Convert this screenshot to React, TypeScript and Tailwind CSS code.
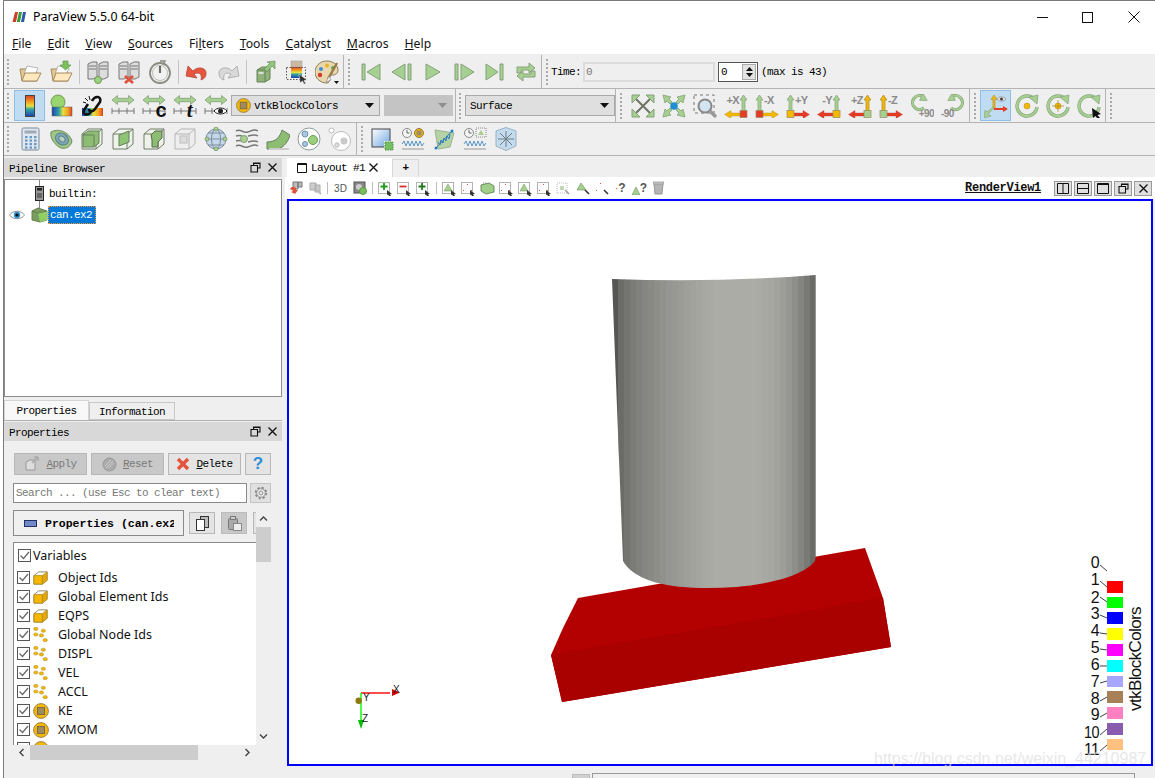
import React from "react";

const G = "#a6d08f";
const GS = "#84a07a";
const Y = "#f5b800";
const YS = "#a8892a";
const R = "#e53a24";

function S({ s = 24, children, vb = "0 0 24 24" }: { s?: number; children: React.ReactNode; vb?: string }) {
  return (
    <svg viewBox={vb} width={s} height={s} className="shrink-0">
      {children}
    </svg>
  );
}

const Defs = () => (
  <svg width="0" height="0" className="absolute">
    <defs>
      <linearGradient id="rbv" x1="0" y1="0" x2="0" y2="1">
        <stop offset="0" stopColor="#d9402a" />
        <stop offset="0.3" stopColor="#f0a020" />
        <stop offset="0.5" stopColor="#e8e040" />
        <stop offset="0.65" stopColor="#30a8a0" />
        <stop offset="1" stopColor="#2040b0" />
      </linearGradient>
      <linearGradient id="rbh" x1="0" y1="0" x2="1" y2="0">
        <stop offset="0" stopColor="#2040b0" />
        <stop offset="0.35" stopColor="#30a8a0" />
        <stop offset="0.55" stopColor="#e8e040" />
        <stop offset="0.8" stopColor="#f0a020" />
        <stop offset="1" stopColor="#d9402a" />
      </linearGradient>
      <linearGradient id="sky" x1="0" y1="0" x2="1" y2="1">
        <stop offset="0" stopColor="#ffffff" />
        <stop offset="1" stopColor="#6fa8e0" />
      </linearGradient>
    </defs>
  </svg>
);

const Folder = ({ arrow }: { arrow?: boolean }) => (
  <S>
    <path d="M4 21 L2 9 h6 l2 2 h8 l1 3 v7z" fill="#e5c88f" stroke="#a58a5e" />
    <path d="M6 14 L9 6 l11 2 -3 7z" fill="#fff" stroke="#999" strokeWidth="0.7" />
    <path d="M4 21 L7 13 H23 L19 21Z" fill="#fde9bd" stroke="#a58a5e" />
    {arrow && <path d="M14 1 h5 v4 h3 l-5.500 5 -5.500 -5 h3z" fill="#7cc05c" stroke="#5d9a48" strokeWidth="0.7" />}
  </S>
);

const Servers = ({ badge }: { badge?: "ok" | "x" | "none" }) => (
  <S>
    <path d="M2 4 l4 -2 h5 v15 l-4 2 h-5z" fill="#ddd" stroke="#777" />
    <path d="M13 4 l4 -2 h5 v15 l-4 2 h-5z" fill="#ddd" stroke="#777" />
    <path d="M3 6 h7 M3 9 h7 M14 6 h7 M14 9 h7" stroke="#777" strokeWidth="1.2" />
    <path d="M12 16 v4" stroke="#777" />
    {badge === "ok" && <circle cx="12" cy="20" r="3.500" fill="#9ed07f" stroke="#6b9c58" />}
    {badge === "x" && <path d="M8 16 L16 23 M16 16 L8 23" stroke="#e0533c" strokeWidth="2.800" />}
  </S>
);

const Power = () => (
  <S>
    <circle cx="12" cy="13" r="10" fill="#f2f2f2" stroke="#8b8b80" strokeWidth="1.800" />
    <circle cx="12" cy="13" r="7.500" fill="none" stroke="#bbb" />
    <path d="M12 6 V13" stroke="#6f6f65" strokeWidth="2.200" />
    <path d="M12 1 h5 l-2 4" fill="none" stroke="#8b8b80" strokeWidth="1.400" />
  </S>
);

const Undo = ({ c = "#e8553f", st = "#b34a38", flip }: { c?: string; st?: string; flip?: boolean }) => (
  <S>
    <g transform={flip ? "translate(24 0) scale(-1 1)" : undefined}>
      <path d="M8 11 C12 6 22 7 21 14 C21 17 19 19 16 20 C17 16 16 11 9 14 L12 18 L1 16 L3 6 L8 11Z" fill={c} stroke={st} strokeWidth="0.8" />
    </g>
  </S>
);

const SaveData = () => (
  <S>
    <path d="M4 10 l5 -3 h8 v12 l-5 3 h-8z" fill="#8fb37a" stroke="#66805a" />
    <path d="M4 10 h8 v12 M12 10 l5 -3" fill="none" stroke="#66805a" />
    <rect x="5.500" y="12" width="5" height="2" fill="#ddd" />
    <path d="M11 9 L17 3 L14 2 L22 1 L22 9 L19 6 L14 12z" fill="#8fc77a" stroke="#66805a" strokeWidth="0.6" />
  </S>
);

const Screenshot = () => (
  <S>
    <rect x="7" y="1" width="11" height="6" fill="#cbb9a2" stroke="#999" strokeWidth="0.5" />
    <rect x="7" y="7" width="11" height="11" fill="url(#rbv)" />
    <rect x="2.500" y="7.500" width="19" height="12" fill="none" stroke="#555" strokeDasharray="1.500 1.500" />
    <path d="M15 14 L23 20 L20 20.500 L22 24 L20 24 L18.500 21 L16 23z" fill="#333" stroke="#fff" strokeWidth="0.5" />
  </S>
);

const Palette = () => (
  <S>
    <path d="M12 1 C4 1 0 7 0 12 C0 18 5 23 12 23 C14 23 15 21 14 19 C13 17 14 15 17 15 C21 15 23 13 23 10 C23 5 18 1 12 1Z" fill="#e9d7ae" stroke="#8a7a55" />
    <circle cx="6" cy="9" r="2" fill="#3b8ed0" />
    <circle cx="12" cy="5.500" r="2" fill="#e9b423" />
    <circle cx="5" cy="15" r="2.200" fill="#d83a2a" />
    <circle cx="18" cy="8" r="2" fill="#55ad55" />
    <path d="M22 3 L13 19" stroke="#9a7b4a" strokeWidth="2.500" />
    <path d="M14 16 L11 22 L16 20z" fill="#eee" stroke="#777" strokeWidth="0.5" />
    <path d="M19 21 h5 l-2.500 3z" fill="#111" />
  </S>
);

const Vcr = ({ d }: { d: string }) => (
  <S>
    <path d={d} fill={G} stroke={GS} strokeWidth="1" />
  </S>
);

const Loop = () => (
  <S>
    <path d="M3 13 V7 h12 V3 l6 5 -6 5 V10 H7 v3z M21 11 v6 H9 v4 l-6 -5 6 -5 v3 H17 v-3z" fill={G} stroke={GS} />
  </S>
);

const Colormap = () => (
  <S>
    <rect x="7.500" y="1.500" width="9" height="21" fill="url(#rbv)" stroke="#444" />
  </S>
);

const SphereMap = () => (
  <S>
    <circle cx="9" cy="8" r="7" fill="#98d56e" stroke="#6f9c58" />
    <rect x="3" y="13" width="20" height="9" fill="url(#rbh)" stroke="#666" strokeWidth="0.5" />
  </S>
);

const LinkMap = () => (
  <S>
    <rect x="2" y="14" width="21" height="8" fill="url(#rbh)" />
    <path d="M12 7 C15 1 22 2 20 8 L15 15 C13 18 9 18 9 15 M11 18 C8 22 2 21 4 16 L8 10" fill="none" stroke="#111" strokeWidth="2.600" />
    <path d="M5 4 L8 7 M9 2 L10 6 M3 8 L6 9" stroke="#111" strokeWidth="1" />
  </S>
);

const Rescale = ({ children }: { children?: React.ReactNode }) => (
  <S>
    <path d="M1 6 l5.500 -4.500 v2.800 h11 V1.500 L23 6 l-5.500 4.500 V7.700 h-11 v2.800z" fill={G} stroke={GS} strokeWidth="0.8" />
    <path d="M1 17 H23 M1 14 V20 M8 14 V20 M16 14 V20 M23 14 V20" stroke="#777" strokeWidth="1" fill="none" />
    {children}
  </S>
);

const Eye = ({ s = 14 }: { s?: number }) => (
  <svg viewBox="0 0 16 10" width={s + 2} height={(s * 10) / 14} className="shrink-0">
    <path d="M0.500 5 C4 0 12 0 15.500 5 C12 10 4 10 0.500 5Z" fill="#fff" stroke="#777" strokeWidth="0.8" />
    <circle cx="8" cy="5" r="3.200" fill="#2b8fd0" />
    <circle cx="8" cy="5" r="1.600" fill="#111" />
  </svg>
);

const FieldIcon = ({ s = 16 }: { s?: number }) => (
  <S s={s} vb="0 0 16 16">
    <circle cx="8" cy="8" r="7.400" fill={Y} stroke="#9a8450" />
    <rect x="4.500" y="4.500" width="7" height="7" fill="#a08a60" stroke="#7a6a48" />
  </S>
);

const CellIcon = () => (
  <S s={15} vb="0 0 16 16">
    <path d="M1 6 L6 2 H15 V11 L10 15 H1Z" fill="none" stroke="#8a8260" />
    <path d="M1 6 H10 V15 H1Z" fill={Y} stroke="#b89020" />
    <path d="M10 6 L15 2 V11 L10 15Z" fill="#e8a800" stroke="#b89020" />
  </S>
);

const PointsIcon = () => (
  <S s={15} vb="0 0 16 16">
    {[
      [3, 2],
      [11, 4],
      [3, 8],
      [9, 9],
      [13, 14],
    ].map(([x, y], i) => (
      <ellipse key={i} cx={x} cy={y} rx="2.300" ry="1.700" fill={Y} stroke="#b09030" strokeWidth="0.6" />
    ))}
  </S>
);

const Calc = () => (
  <S>
    <rect x="4" y="1" width="17" height="22" rx="1.500" fill="#dfe8f2" stroke="#7a8794" />
    <rect x="6.500" y="3.500" width="12" height="3" fill="#9fa9b3" />
    {[9, 12.5, 16, 19.5].flatMap((y) =>
      [7, 11.5, 16].map((x) => <rect key={`${x}-${y}`} x={x} y={y} width="2.500" height="2.200" fill="#6c98c0" />),
    )}
  </S>
);

const Contour = () => (
  <S>
    <path d="M2 5 C8 1 20 4 23 14 C22 21 14 23 10 20 C4 16 1 10 2 5Z" fill="#9cc884" stroke="#708c62" />
    <ellipse cx="13" cy="12" rx="7" ry="5.500" fill="#7fa7b8" stroke="#5d7f8c" transform="rotate(35 13 12)" />
    <ellipse cx="13" cy="12" rx="3.500" ry="2.500" fill="#b8d2c0" stroke="#5d7f8c" transform="rotate(35 13 12)" />
  </S>
);

const Box = ({ v }: { v: "clip" | "slice" | "extract" | "ghost" }) => {
  const st = v === "ghost" ? "#b5b5b5" : "#6f7d66";
  return (
    <S>
      <path d="M2 7 L8 2 H22 V17 L16 22 H2Z" fill={v === "ghost" ? "#eee" : "#eef2ea"} stroke={st} />
      <path d="M2 7 H16 V22 M16 7 L22 2" fill="none" stroke={st} />
      {v === "clip" && <path d="M3 8 L8 4 H19 V16 L14 20 H3Z" fill="#8dbd72" stroke="#64805a" />}
      {v === "clip" && <path d="M3 8 H14 V20" fill="none" stroke="#64805a" />}
      {v === "slice" && <path d="M8 8 L18 4 V15 L8 19Z" fill="#8dc475" stroke="#64805a" />}
      {v === "extract" && <path d="M9 8 L13 4 H20 V11 L16 15 V20 H10 V13Z" fill="#8dbd72" stroke="#55664c" />}
      {v === "ghost" && <rect x="7" y="9" width="7" height="7" fill="#ddd" stroke="#bbb" />}
    </S>
  );
};

const Globe = () => (
  <S>
    <circle cx="12" cy="12" r="10" fill="#c4d8ec" stroke="#7d8c9a" />
    <ellipse cx="12" cy="12" rx="4.500" ry="10" fill="none" stroke="#7d8c9a" />
    <path d="M2 12 H22 M4 6 H20 M4 18 H20" stroke="#7d8c9a" />
    {[
      [12, 2],
      [3, 12],
      [21, 12],
      [12, 22],
    ].map(([x, y], i) => (
      <circle key={i} cx={x} cy={y} r="2" fill={G} stroke={GS} />
    ))}
  </S>
);

const Stream = () => (
  <S>
    <path d="M1 4 C6 1 8 7 13 5 S20 2 23 4 M1 19 C6 16 8 22 13 20 S20 17 23 19 M13 9 C17 8 20 7 23 9 M13 15 C17 14 20 13 23 15" fill="none" stroke="#777" strokeWidth="1.500" />
    <path d="M1 9 C4 8 6 9 7 9 M1 14 C4 13 6 14 7 14" stroke="#777" strokeWidth="1.500" fill="none" />
    <circle cx="9" cy="12" r="3.500" fill={G} stroke={GS} />
  </S>
);

const Warp = () => (
  <S>
    <path d="M1 15 C10 15 14 10 16 3 L24 8 C22 15 18 20 12 22 H1Z" fill="#8dbd72" stroke="#64805a" />
    <path d="M3 22 H23" stroke="#ccc" strokeWidth="2" />
  </S>
);

const Group = ({ faded }: { faded?: boolean }) => (
  <S>
    {faded ? (
      <>
        <circle cx="13" cy="14" r="9.500" fill="#fff" stroke="#bbb" />
        <circle cx="3.500" cy="3.500" r="2.500" fill="#fff" stroke="#bbb" />
        <circle cx="16" cy="14" r="3.500" fill="#c9c9c9" />
        <circle cx="9" cy="18" r="2.200" fill="#ddd" stroke="#bbb" />
      </>
    ) : (
      <>
        <circle cx="12" cy="12" r="11" fill="#fff" stroke="#8c9c9c" />
        <circle cx="8" cy="7" r="3" fill="#a8c8e4" stroke="#6e8ea8" />
        <circle cx="8" cy="17" r="2.500" fill="#a8c8e4" stroke="#6e8ea8" />
        <circle cx="16" cy="13" r="4.500" fill="#9ad07c" stroke="#6b9c58" />
      </>
    )}
  </S>
);

const Fit = () => (
  <S>
    <path d="M12 12 L3 3 M12 12 L21 3 M12 12 L3 21 M12 12 L21 21" stroke="#6f7466" strokeWidth="2" />
    <path d="M1 1 H9 L1 9Z M23 1 H15 L23 9Z M1 23 H9 L1 15Z M23 23 H15 L23 15Z" fill={G} stroke={GS} />
  </S>
);

const Zoomto = () => (
  <S>
    <path d="M1 1 L9 3 L7 5 L10 8 L8 10 L5 7 L3 9Z M23 1 L15 3 L17 5 L14 8 L16 10 L19 7 L21 9Z M1 23 L9 21 L7 19 L10 16 L8 14 L5 17 L3 15Z M23 23 L15 21 L17 19 L14 16 L16 14 L19 17 L21 15Z" fill={G} stroke={GS} strokeWidth="0.8" />
    <circle cx="12" cy="12" r="3.800" fill="#1f8fd0" />
  </S>
);

const Mag = () => (
  <S>
    <rect x="1" y="1" width="20" height="18" fill="none" stroke="#777" strokeDasharray="3 3" />
    <circle cx="12" cy="12" r="6.500" fill="#d3e4f0" stroke="#888" strokeWidth="2" />
    <path d="M17 17 L23 23" stroke="#999" strokeWidth="3.500" />
  </S>
);

const Axis = ({
  side,
  label,
  up,
  sq,
  arrow,
}: {
  side: "l" | "r";
  label: string;
  up: string;
  sq: string;
  arrow: string;
}) => {
  const ax = side === "r" ? 16 : 1;
  const upX = ax + 3.5;
  return (
    <S>
      <path d={`M${upX} 1 l3.500 5 h-2 v11 h-3 v-11 h-2z`} fill={up} stroke={up === G ? GS : YS} strokeWidth="0.7" />
      {side === "r" ? (
        <path d="M16 19 H7 v-2.500 l-6.500 4 6.500 4 v-2.500 H16z" fill={arrow} stroke={arrow === Y ? YS : "#b34a38"} strokeWidth="0.4" />
      ) : (
        <path d="M8 19 H17 v-2.500 l6.500 4 -6.500 4 v-2.500 H8z" fill={arrow} stroke={arrow === Y ? YS : "#b34a38"} strokeWidth="0.4" />
      )}
      <rect x={ax} y="16.500" width="7" height="7" fill={sq} stroke="#9a8a60" strokeWidth="0.7" />
      <text
        x={side === "r" ? 15 : 9}
        y="10"
        textAnchor={side === "r" ? "end" : "start"}
        fontSize="11"
        fontWeight="700"
        fill="#8a8a8a"
        fontFamily="Liberation Sans, sans-serif"
      >
        {label}
      </text>
    </S>
  );
};

const Rot = ({ label, flip }: { label: string; flip?: boolean }) => (
  <S>
    <g transform={flip ? "translate(24 0) scale(-1 1)" : undefined}>
      <path d="M14 14 A7 7 0 1 1 13 2.500" fill="none" stroke={GS} strokeWidth="3.200" />
      <path d="M14 14 A7 7 0 1 1 13 2.500" fill="none" stroke={G} strokeWidth="1.800" />
      <path d="M11 0 L18 5 L11 8z" fill={G} stroke={GS} strokeWidth="0.6" transform="rotate(25 14 4)" />
    </g>
    <text x={flip ? 0 : 24} y="23" textAnchor={flip ? "start" : "end"} fontSize="10" fontWeight="700" fill="#8a8a8a" fontFamily="Liberation Sans, sans-serif">
      {label}
    </text>
  </S>
);

const Ori = () => (
  <S>
    <path d="M10 1 l3 4.500 h-2 v9 h-2 v-9 h-2z" fill={Y} stroke={YS} strokeWidth="0.6" />
    <path d="M10 14 H19 v-2 l5 3 -5 3 v-2 H10z" fill={R} />
    <path d="M10 14 L4 20 L7 22 L0 24 L1 16 L3 18 L9 13z" fill={G} stroke={GS} strokeWidth="0.6" />
    <path d="M13 5 C15 2 20 2 22 5 C20 8 15 8 13 5Z" fill="#ddd" stroke="#888" strokeWidth="0.6" />
    <circle cx="17.500" cy="5" r="1.500" fill="#444" />
  </S>
);

const RotCenter = ({ v }: { v: "dot" | "target" | "pick" }) => (
  <S>
    <path d="M20 6 A10 10 0 1 0 22 13" fill="none" stroke={GS} strokeWidth="3.400" />
    <path d="M20 6 A10 10 0 1 0 22 13" fill="none" stroke={G} strokeWidth="2.200" />
    <path d="M14 3 L23 1 L22 10Z" fill={G} stroke={GS} strokeWidth="0.7" />
    {v === "dot" && <circle cx="12" cy="12" r="3" fill={Y} stroke={YS} strokeWidth="0.5" />}
    {v === "target" && (
      <>
        <circle cx="12" cy="12" r="3" fill={Y} stroke={YS} strokeWidth="0.5" />
        <path d="M12 6 V18 M6 12 H18" stroke={YS} strokeWidth="0.7" />
      </>
    )}
    {v === "pick" && <path d="M15 14 L24 20 L20.500 21 L23 24 L20 24 L18.500 22 L16 24z" fill="#111" />}
  </S>
);

const CompareIcon = () => (
  <S>
    <rect x="2" y="2" width="18" height="18" fill="url(#sky)" stroke="#444" />
    <rect x="14" y="14" width="10" height="10" fill="#f0f0f0" />
    <rect x="15" y="15" width="8" height="8" fill="#74c060" stroke="#4f8c44" strokeDasharray="1.500 1" />
  </S>
);

const Wave = ({ y = 17 }: { y?: number }) => (
  <path d={`M1 ${y} l2 -3 2 5 2 -5 2 5 2 -5 2 5 2 -5 2 5 2 -5 2 5 2 -3`} fill="none" stroke="#4a8cc0" strokeWidth="0.9" />
);

const Plot1 = () => (
  <S>
    <circle cx="6" cy="6" r="4.500" fill="#f5f5f5" stroke="#888" />
    <path d="M6 3 V6 H8.500" fill="none" stroke="#666" />
    <circle cx="18" cy="6" r="4.500" fill={Y} stroke="#8a7a50" />
    <rect x="15.500" y="3.500" width="5" height="5" fill="#a08a60" />
    <Wave />
    <path d="M1 22 H23" stroke="#999" />
  </S>
);

const Plot2 = () => (
  <S>
    <path d="M3 3 L22 6 L18 20 L6 22Z" fill="#b6d3a6" stroke="#9ab58c" />
    <path d="M4 21 L20 4" stroke="#2a78c0" strokeWidth="1" />
    <path d="M6 15 l2 3 1 -5 2 3 1 -5 2 3 1 -5 2 3 1 -5" fill="none" stroke="#2a78c0" strokeWidth="1" />
    <circle cx="4" cy="21" r="1.500" fill="#2a78c0" />
    <circle cx="20" cy="4" r="1.500" fill="#2a78c0" />
  </S>
);

const Plot3 = () => (
  <S>
    <circle cx="6" cy="6" r="4.500" fill="#f5f5f5" stroke="#888" />
    <path d="M6 3 V6 H8.500" fill="none" stroke="#666" />
    <rect x="13" y="1" width="10" height="9" fill="none" stroke="#888" strokeDasharray="1 1" />
    <path d="M15 8 l3 -5 3 5z" fill={G} />
    <Wave />
    <path d="M1 22 H23" stroke="#999" />
  </S>
);

const Cube3 = () => (
  <S>
    <path d="M12 0.500 L22 4 V19 L12 23.500 L2 19 V4Z" fill="#c3dbee" stroke="#9ab0c2" />
    <path d="M4 12 H20 M12 4 V20 M6 6 L18 18 M18 6 L6 18" stroke="#6f7c82" strokeWidth="1" />
  </S>
);

const B = ({ children, sel }: { children: React.ReactNode; sel?: boolean }) => (
  <div
    className={
      sel
        ? "w-[31px] h-[31px] shrink-0 flex items-center justify-center bg-[#bfdcf3] border border-[#8fbfe6]"
        : "w-[31px] h-[31px] shrink-0 flex items-center justify-center"
    }
  >
    {children}
  </div>
);

const Sep = () => (
  <div className="w-[6px] h-full shrink-0 flex items-center justify-center">
    <div className="w-px h-[24px] bg-[#c4c4c4]" />
  </div>
);

const Handle = ({ cls }: { cls: string }) => <div className={`w-[2px] h-[26px] shrink-0 border-l-2 border-dotted border-[#ababab] ${cls}`} />;

const Section = ({ cls, children }: { cls: string; children: React.ReactNode }) => (
  <div className={`flex items-center h-full shrink-0 ${cls}`}>{children}</div>
);

const Row = ({ h, children }: { h: string; children: React.ReactNode }) => (
  <div className={`flex items-center bg-[#efefef] border-b border-[#b4b4b4] shrink-0 ${h}`}>{children}</div>
);

const Combo = ({ w, icon, label, disabled }: { w: string; icon?: boolean; label?: string; disabled?: boolean }) => (
  <div
    className={`${w} h-[21px] shrink-0 flex items-center pl-[4px] pr-[5px] border ${
      disabled ? "bg-[#c4c4c4] border-[#c4c4c4]" : "bg-[#dfdfdf] border-[#a8a8a8]"
    }`}
  >
    {icon && (
      <span className="mr-[3px]">
        <FieldIcon s={15} />
      </span>
    )}
    <span className="flex-1 whitespace-pre pt-[2px]">{label}</span>
    <svg width="9" height="5" viewBox="0 0 9 5">
      <path d="M0 0 H9 L4.500 5Z" fill={disabled ? "#8f8f8f" : "#111"} />
    </svg>
  </div>
);

const Toolbar1 = () => (
  <Row h="h-[34px]">
    <Section cls="pl-[3px] border-r border-[#b4b4b4]">
      <Handle cls="mr-[5px]" />
      <B><Folder /></B>
      <B><Folder arrow /></B>
      <Sep />
      <B><Servers badge="ok" /></B>
      <B><Servers badge="x" /></B>
      <B><Power /></B>
      <Sep />
      <B><Undo /></B>
      <B><Undo c="#d9d9d9" st="#a3a3a3" flip /></B>
      <Sep />
      <B><SaveData /></B>
      <B><Screenshot /></B>
      <B><Palette /></B>
      <div className="w-px" />
    </Section>
    <Section cls="pl-[4px] border-r border-[#b4b4b4]">
      <Handle cls="mr-[5px]" />
      <B><Vcr d="M3 4 H6 V20 H3Z M21 4 V20 L8 12Z" /></B>
      <B><Vcr d="M18 4 H21 V20 H18Z M15 4 V20 L2 12Z" /></B>
      <B><Vcr d="M5 4 L19 12 L5 20Z" /></B>
      <B><Vcr d="M3 4 H6 V20 H3Z M9 4 L22 12 L9 20Z" /></B>
      <B><Vcr d="M3 4 L15 12 L3 20Z M17 4 H20 V20 H17Z" /></B>
      <B><Loop /></B>
    </Section>
    <Section cls="pl-[4px]">
      <Handle cls="mr-[3px]" />
      <span className="w-[32px] pt-px">Time:</span>
      <div className="w-[132px] h-[20px] border-2 border-[#dcdcdc] bg-[#efefef] pl-[1px] pt-px flex items-center text-[#777]">0</div>
      <div className="ml-[3px] w-[40px] h-[20px] border border-[#555] bg-white flex items-center justify-between">
        <span className="pl-[2px] pt-px">0</span>
        <div className="w-[14px] h-[16px] mr-px border border-[#aaa] bg-[#e2e2e2] flex flex-col items-center justify-center gap-[2px]">
          <svg width="7" height="4" viewBox="0 0 7 4"><path d="M0 4 L3.500 0 L7 4Z" fill="#111" /></svg>
          <svg width="7" height="4" viewBox="0 0 7 4"><path d="M0 0 H7 L3.500 4Z" fill="#111" /></svg>
        </div>
      </div>
      <span className="ml-[3px] pt-px">(max is 43)</span>
    </Section>
  </Row>
);

const Toolbar2 = () => (
  <Row h="h-[34px]">
    <Section cls="pl-[3px] border-r border-[#b4b4b4]">
      <Handle cls="mr-[5px]" />
      <B sel><Colormap /></B>
      <B><SphereMap /></B>
      <B><LinkMap /></B>
      <B><Rescale /></B>
      <B>
        <Rescale>
          <text x="24" y="23" textAnchor="end" fontSize="20" fontWeight="700" fontFamily="Liberation Sans, sans-serif" fill="#111">c</text>
        </Rescale>
      </B>
      <B>
        <Rescale>
          <text x="19" y="23" textAnchor="end" fontSize="21" fontWeight="700" fontStyle="italic" fontFamily="Liberation Serif, serif" fill="#111">t</text>
        </Rescale>
      </B>
      <B>
        <Rescale>
          <path d="M10 17 C13 13 20 13 23 17 C20 21 13 21 10 17Z" fill="#fff" stroke="#222" />
          <circle cx="16.500" cy="17" r="2.500" fill="#222" />
        </Rescale>
      </B>
      <Combo w="w-[149px]" icon label="vtkBlockColors" />
      <div className="ml-[4px]"><Combo w="w-[69px]" disabled /></div>
      <div className="w-[2px]" />
    </Section>
    <Section cls="pl-[3px] border-r border-[#b4b4b4]">
      <Handle cls="mr-[4px]" />
      <Combo w="w-[150px]" label="Surface" />
    </Section>
    <Section cls="pl-[4px] border-r border-[#b4b4b4]">
      <Handle cls="mr-[5px]" />
      <B><Fit /></B>
      <B><Zoomto /></B>
      <B><Mag /></B>
      <B><Axis side="r" label="+X" up={G} sq={R} arrow={Y} /></B>
      <B><Axis side="l" label="-X" up={G} sq={R} arrow={Y} /></B>
      <B><Axis side="l" label="+Y" up={G} sq={Y} arrow={R} /></B>
      <B><Axis side="r" label="-Y" up={G} sq={Y} arrow={R} /></B>
      <B><Axis side="r" label="+Z" up={Y} sq={G} arrow={R} /></B>
      <B><Axis side="l" label="-Z" up={Y} sq={G} arrow={R} /></B>
      <B><Rot label="+90" /></B>
      <B><Rot label="-90" flip /></B>
      <div className="w-px" />
    </Section>
    <Section cls="pl-[4px] border-r border-[#b4b4b4]">
      <Handle cls="mr-[4px]" />
      <B sel><Ori /></B>
      <B><RotCenter v="dot" /></B>
      <B><RotCenter v="target" /></B>
      <B><RotCenter v="pick" /></B>
      <div className="w-px" />
    </Section>
    <Section cls="pl-[4px]">
      <Handle cls="" />
    </Section>
  </Row>
);

const Toolbar3 = () => (
  <Row h="h-[33px]">
    <Section cls="pl-[3px] border-r border-[#b4b4b4]">
      <Handle cls="mr-[5px]" />
      <B><Calc /></B>
      <B><Contour /></B>
      <B><Box v="clip" /></B>
      <B><Box v="slice" /></B>
      <B><Box v="extract" /></B>
      <B><Box v="ghost" /></B>
      <B><Globe /></B>
      <B><Stream /></B>
      <B><Warp /></B>
      <B><Group /></B>
      <B><Group faded /></B>
      <div className="w-px" />
    </Section>
    <Section cls="pl-[4px]">
      <Handle cls="mr-[3px]" />
      <B><CompareIcon /></B>
      <B><Plot1 /></B>
      <B><Plot2 /></B>
      <B><Plot3 /></B>
      <B><Cube3 /></B>
    </Section>
  </Row>
);

const FloatIcon = () => (
  <svg width="11" height="11" viewBox="0 0 11 11">
    <path d="M3.500 3 V1 H10 V6 H7.500 M1 3.500 H7.500 V10 H1Z M1 3.500 H7.500 M3.500 1.500 H10" fill="none" stroke="#111" strokeWidth="1.100" />
  </svg>
);

const CloseIcon = ({ s = 9 }: { s?: number }) => (
  <svg width={s} height={s} viewBox="0 0 9 9">
    <path d="M0.500 0.500 L8.500 8.500 M8.500 0.500 L0.500 8.500" stroke="#111" strokeWidth="1.300" />
  </svg>
);

const DockTitle = ({ title }: { title: string }) => (
  <div className="h-[19px] shrink-0 bg-[#d8d8d8] flex items-center pl-[5px] pr-[5px]">
    <span className="flex-1 pt-[3px]">{title}</span>
    <FloatIcon />
    <span className="ml-[7px] flex"><CloseIcon /></span>
  </div>
);

const PipelineTree = () => (
  <div className="h-[218px] shrink-0 mt-[2px] border border-[#8b8f94] bg-white relative">
    <div className="absolute left-[34px] top-0 w-px h-[33px] bg-[#8a8a8a]" />
    <div className="flex items-center h-[25px] pt-[2px] pl-[30px]">
      <svg width="9" height="15" viewBox="0 0 9 15" className="relative">
        <rect x="0.500" y="0.500" width="8" height="14" fill="#999" stroke="#222" />
        <rect x="2" y="2" width="5" height="2.500" fill="#222" />
        <rect x="2" y="7" width="5" height="5" fill="#666" />
      </svg>
      <span className="ml-[5px] pt-px">builtin:</span>
    </div>
    <div className="flex items-center h-[18px] mt-[1px] pl-[4px] relative">
      <Eye s={14} />
      <span className="ml-[6px] flex">
        <svg width="17" height="16" viewBox="0 0 17 16">
          <path d="M1 4 L7 1 L16 4 V13 L9 15 L1 13Z" fill="#7a9c5e" stroke="#67804f" />
          <path d="M7 6 L16 4 V13 L9 15Z" fill="#8fd064" />
          <path d="M1 4 L7 6 L16 4" fill="none" stroke="#67804f" />
        </svg>
      </span>
      <span className="h-[18px] w-[48px] flex items-center pl-[1px] pt-px bg-[#0078d7] text-white border border-dotted border-[#ff9a2e]">can.ex2</span>
    </div>
  </div>
);

const Tabs = () => (
  <div className="h-[20px] shrink-0 mt-[4px] flex items-end border-b border-[#b0b0b0]">
    <div className="w-[85px] h-[20px] pt-[2px] bg-[#f8f8f8] border border-b-0 border-[#d4d4d4] flex items-center justify-center">Properties</div>
    <div className="w-[86px] h-[18px] pt-[2px] bg-[#efefef] border border-[#c8c8c8] flex items-center justify-center">Information</div>
  </div>
);

const Check = ({ cls }: { cls: string }) => (
  <div className={`w-[13px] h-[13px] shrink-0 border border-[#555] bg-white flex items-center justify-center ${cls}`}>
    <svg width="11" height="11" viewBox="0 0 11 11">
      <path d="M1.500 5.500 L4.500 8.500 L10 2" fill="none" stroke="#666" strokeWidth="1.200" />
    </svg>
  </div>
);

const PBtn = ({ w, disabled, children }: { w: string; disabled?: boolean; children: React.ReactNode }) => (
  <div
    className={`${w} h-[22px] shrink-0 flex items-center justify-center gap-[6px] border border-[#b8b8b8] ${
      disabled ? "bg-[#c8c8c8] text-[#7a7a7a]" : "bg-[#e4e4e4] text-black"
    }`}
  >
    {children}
  </div>
);

const vars: [string, "cell" | "pt" | "field"][] = [
  ["Object Ids", "cell"],
  ["Global Element Ids", "cell"],
  ["EQPS", "cell"],
  ["Global Node Ids", "pt"],
  ["DISPL", "pt"],
  ["VEL", "pt"],
  ["ACCL", "pt"],
  ["KE", "field"],
  ["XMOM", "field"],
  ["", "field"],
];

const Arrow = ({ d }: { d: "u" | "d" | "l" | "r" }) => (
  <svg width="9" height="9" viewBox="0 0 9 9">
    {d === "u" && <path d="M1 6.500 L4.500 3 L8 6.500" fill="none" stroke="#444" strokeWidth="1.400" />}
    {d === "d" && <path d="M1 2.500 L4.500 6 L8 2.500" fill="none" stroke="#444" strokeWidth="1.400" />}
    {d === "l" && <path d="M6.500 1 L3 4.500 L6.500 8" fill="none" stroke="#444" strokeWidth="1.400" />}
    {d === "r" && <path d="M2.500 1 L6 4.500 L2.500 8" fill="none" stroke="#444" strokeWidth="1.400" />}
  </svg>
);

const Properties = () => (
  <div className="flex-1 min-h-0 bg-[#efefef] pl-[9px] pt-[12px]">
    <div className="flex gap-[4px] pl-px">
      <PBtn w="w-[73px]" disabled>
        <svg width="16" height="16" viewBox="0 0 16 16">
          <path d="M2 6 L6 4 H11 V14 H2Z" fill="#ddd" stroke="#999" />
          <path d="M8 7 L14 1 M14 1 H10 M14 1 V5" stroke="#aaa" strokeWidth="1.500" fill="none" />
        </svg>
        <span className="pt-px"><u>A</u>pply</span>
      </PBtn>
      <PBtn w="w-[73px]" disabled>
        <svg width="15" height="15" viewBox="0 0 15 15">
          <circle cx="7.500" cy="7.500" r="6.500" fill="#aaa" stroke="#999" />
          <path d="M4 11 L11 4 M6 11.500 L11.500 6 M3 9 L9 3" stroke="#ccc" />
        </svg>
        <span className="pt-px"><u>R</u>eset</span>
      </PBtn>
      <PBtn w="w-[73px]">
        <svg width="14" height="14" viewBox="0 0 14 14">
          <path d="M2 2 L12 12 M12 2 L2 12" stroke="#e4533e" strokeWidth="3.400" />
        </svg>
        <span className="pt-px"><u>D</u>elete</span>
      </PBtn>
      <div className="w-[26px] h-[22px] shrink-0 border border-[#b8b8b8] bg-[#e4e4e4] flex items-center justify-center text-[#2a8fd8] text-[17px] font-bold font-['Liberation_Sans',sans-serif] tracking-normal">?</div>
    </div>
    <div className="flex mt-[8px] h-[20px]">
      <div className="w-[234px] h-[20px] border border-[#8a8a8a] bg-white pl-[2px] pt-px flex items-center text-[#777]">Search ... (use Esc to clear text)</div>
      <div className="ml-[3px] w-[21px] h-[20px] border border-[#c4c4c4] bg-[#e0e0e0] flex items-center justify-center">
        <svg width="16" height="16" viewBox="0 0 16 16">
          <circle cx="8" cy="8" r="5" fill="none" stroke="#888" strokeWidth="2.400" strokeDasharray="2.200 1.700" />
          <circle cx="8" cy="8" r="4.200" fill="#eee" stroke="#999" />
          <circle cx="8" cy="8" r="2" fill="#e0e0e0" stroke="#999" />
        </svg>
      </div>
    </div>
    <div className="flex mt-[7px] h-[235px]">
      <div className="w-[243px] shrink-0 flex flex-col overflow-hidden">
        <div className="flex h-[26px] shrink-0">
          <div className="w-[171px] shrink-0 h-[26px] border border-[#8a8a8a] bg-[#f0f0f0] flex items-center pl-[10px] pt-px overflow-hidden whitespace-nowrap font-bold text-[11.500px] tracking-normal">
            <svg width="13" height="7" viewBox="0 0 13 7" className="mr-[8px] shrink-0">
              <rect x="0.500" y="0.500" width="12" height="6" fill="#7289c8" stroke="#222f66" />
            </svg>
            <span className="w-[129px] overflow-hidden shrink-0">Properties (can.ex2)</span>
          </div>
          <div className="ml-[5px] mt-[2px] w-[26px] h-[22px] shrink-0 border border-[#b8b8b8] bg-[#e4e4e4] flex items-center justify-center">
            <svg width="15" height="15" viewBox="0 0 15 15">
              <rect x="5.500" y="0.500" width="8" height="11" fill="#bbb" stroke="#333" />
              <rect x="1.500" y="3.500" width="8" height="11" fill="#fff" stroke="#333" />
            </svg>
          </div>
          <div className="ml-[6px] mt-[2px] w-[26px] h-[22px] shrink-0 bg-[#c8c8c8] border border-[#bbb] flex items-center justify-center">
            <svg width="15" height="15" viewBox="0 0 15 15">
              <rect x="1.500" y="2.500" width="9" height="11" rx="1" fill="#aaa" stroke="#777" />
              <rect x="3.500" y="0.500" width="5" height="3" fill="#ccc" stroke="#777" />
              <rect x="6.500" y="7.500" width="8" height="7" fill="#eee" stroke="#888" />
            </svg>
          </div>
          <div className="ml-[6px] mt-[2px] w-[10px] h-[22px] shrink-0 border border-r-0 border-[#b8b8b8] bg-[#e4e4e4]" />
        </div>
        <div className="mt-[6px] flex-1 min-h-0 border-t border-l border-[#8a8a8a] bg-white overflow-hidden font-['Noto_Sans',sans-serif] text-[12.500px] tracking-normal text-[#111]">
          <div className="flex items-center h-[25px] pl-[4px]">
            <Check cls="" />
            <span className="ml-[2px] pt-px">Variables</span>
          </div>
          {vars.map(([n, k], i) => (
            <div key={i} className="flex items-center h-[19px] pl-[3px]">
              <Check cls="" />
              <span className="w-[23px] ml-[3px] flex">
                {k === "cell" && <CellIcon />}
                {k === "pt" && <PointsIcon />}
                {k === "field" && <FieldIcon s={16} />}
              </span>
              <span className="ml-[2px] pt-px">{n}</span>
            </div>
          ))}
        </div>
      </div>
      <div className="w-[15px] shrink-0 flex flex-col">
        <div className="h-[17px] flex items-center justify-center"><Arrow d="u" /></div>
        <div className="h-[35px] bg-[#cdcdcd]" />
        <div className="flex-1" />
        <div className="h-[17px] flex items-center justify-center"><Arrow d="d" /></div>
      </div>
    </div>
    <div className="flex items-center h-[15px] w-[243px]">
      <div className="w-[17px] flex justify-center"><Arrow d="l" /></div>
      <div className="w-[168px] h-[15px] bg-[#cdcdcd]" />
      <div className="flex-1" />
      <div className="w-[17px] flex justify-center"><Arrow d="r" /></div>
    </div>
  </div>
);

const Sidebar = () => (
  <div className="w-[278px] shrink-0 flex flex-col pt-[2px] bg-[#efefef]">
    <DockTitle title="Pipeline Browser" />
    <PipelineTree />
    <Tabs />
    <div className="mt-[1px]">
      <DockTitle title="Properties" />
    </div>
    <Properties />
  </div>
);

const T = ({ children }: { children: React.ReactNode }) => (
  <div className="w-[19px] h-[20px] shrink-0 flex items-center justify-center">{children}</div>
);

const Sel = ({ c, minus, plus, tri, dots }: { c?: string; minus?: boolean; plus?: boolean; tri?: boolean; dots?: boolean }) => (
  <svg width="15" height="15" viewBox="0 0 15 15">
    <rect x="0.500" y="1.500" width="11" height="11" fill="none" stroke="#666" strokeDasharray="1 1" />
    {plus && <path d="M6 2 V9 M2.500 5.500 H9.500" stroke={c} strokeWidth="1.800" />}
    {minus && <path d="M2.500 5.500 H9.500" stroke={c} strokeWidth="1.800" />}
    {tri && <path d="M6 3 L10 10 H2Z" fill={c} stroke="#6d8d60" strokeWidth="0.5" />}
    {dots && <path d="M6 3 h1 v1 h-1z M2 9 h1 v1 h-1z M10 9 h1 v1 h-1z" fill="#e0533c" />}
    <path d="M9 9 L14 13 L12 13.300 L13 15 L11 15 L10 13.500 L9 14Z" fill="#333" />
  </svg>
);

const ViewBtn = ({ children }: { children: React.ReactNode }) => (
  <div className="w-[18px] h-[15px] shrink-0 border border-[#9a9a9a] bg-[#e0e0e0] flex items-center justify-center">{children}</div>
);

const ViewToolbar = () => (
  <div className="h-[22px] shrink-0 bg-white flex items-center pl-[1px] pr-[3px] text-[#111]">
    <T>
      <svg width="14" height="14" viewBox="0 0 14 14">
        <path d="M4 1 H9 V8 H4Z M9 1 H13 V6 H9Z" fill="#bbb" stroke="#777" />
        <path d="M1 8 C3 4 8 6 7 9 L9 9 L6 13 L2 11 L4 10 C4 9 2 9 1 8Z" fill="#e0533c" />
      </svg>
    </T>
    <T>
      <svg width="14" height="14" viewBox="0 0 14 14">
        <path d="M2 2 H8 V9 H2Z M7 4 H12 V11 H7Z" fill="#ccc" stroke="#aaa" />
        <path d="M9 9 L13 13" stroke="#bbb" strokeWidth="2" />
      </svg>
    </T>
    <div className="w-px h-[12px] bg-[#bcbcbc] mx-[3px]" />
    <T><span className="font-['Liberation_Sans',sans-serif] text-[10px] tracking-normal text-[#555]">3D</span></T>
    <T>
      <svg width="14" height="14" viewBox="0 0 14 14">
        <rect x="1" y="1" width="11" height="11" fill="#888" stroke="#555" />
        <circle cx="6" cy="6" r="3" fill="#ccc" />
        <circle cx="10" cy="10" r="3.500" fill="#7cc05c" stroke="#5d9a48" />
      </svg>
    </T>
    <div className="w-px h-[12px] bg-[#bcbcbc] mx-[3px]" />
    <T><Sel c="#1f9a1f" plus /></T>
    <T><Sel c="#d92c2c" minus /></T>
    <T><Sel c="#1f7a1f" plus /></T>
    <div className="w-px h-[12px] bg-[#bcbcbc] mx-[3px]" />
    <T><Sel c="#a6d08f" tri /></T>
    <T><Sel dots /></T>
    <T>
      <svg width="15" height="15" viewBox="0 0 15 15">
        <path d="M1 4 L9 2 L14 5 V11 L6 13 L1 10Z" fill="#9fcf88" stroke="#6d8d60" />
        <path d="M3 2 H7" stroke="#888" strokeDasharray="1 1" />
      </svg>
    </T>
    <T><Sel dots c="#d92c2c" /></T>
    <T><Sel c="#a6d08f" tri /></T>
    <T><Sel dots /></T>
    <T>
      <svg width="15" height="15" viewBox="0 0 15 15">
        <rect x="1" y="2" width="10" height="10" fill="none" stroke="#bbb" strokeDasharray="1 1" />
        <path d="M4 5 H8 V9 H4Z" fill="#c4d8b8" />
        <path d="M9 9 L13 13" stroke="#999" strokeWidth="1.500" />
      </svg>
    </T>
    <T>
      <svg width="14" height="14" viewBox="0 0 14 14">
        <path d="M5 2 L10 9 H1Z" fill="#a6d08f" stroke="#6d8d60" strokeWidth="0.6" />
        <path d="M9 9 L13 13" stroke="#333" strokeWidth="1.600" />
      </svg>
    </T>
    <T>
      <svg width="14" height="14" viewBox="0 0 14 14">
        <path d="M5 2 h1 v1 h-1z M1 9 h1 v1 h-1z M9 9 h1 v1 h-1z" fill="#e0533c" />
        <path d="M9 9 L13 13" stroke="#333" strokeWidth="1.600" />
      </svg>
    </T>
    <T>
      <span className="relative text-[12px] font-bold font-['Liberation_Sans',sans-serif] tracking-normal text-[#555]">
        <span className="text-[#e0533c] text-[8px] align-middle">·</span>?
      </span>
    </T>
    <T>
      <span className="flex items-end">
        <svg width="8" height="8" viewBox="0 0 8 8"><path d="M4 0 L8 8 H0Z" fill="#a6d08f" stroke="#6d8d60" strokeWidth="0.6" /></svg>
        <span className="text-[12px] font-bold leading-[13px] font-['Liberation_Sans',sans-serif] tracking-normal text-[#555]">?</span>
      </span>
    </T>
    <T>
      <svg width="11" height="14" viewBox="0 0 11 14">
        <path d="M1 3 H10 L9 13 H2Z" fill="#b4b4b4" stroke="#999" />
        <rect x="0.500" y="1" width="10" height="2" fill="#c8c8c8" stroke="#aaa" />
      </svg>
    </T>
    <div className="flex-1" />
    <span className="font-bold underline font-['Liberation_Mono',monospace] text-[12px] tracking-[-0.3px] mr-[13px]">RenderView1</span>
    <div className="flex gap-[2px]">
      <ViewBtn>
        <svg width="12" height="11" viewBox="0 0 12 11"><path d="M0.500 0.500 H11.500 V10.500 H0.500Z M6 0.500 V10.500" fill="none" stroke="#111" /></svg>
      </ViewBtn>
      <ViewBtn>
        <svg width="12" height="11" viewBox="0 0 12 11"><path d="M0.500 0.500 H11.500 V10.500 H0.500Z M0.500 5.500 H11.500" fill="none" stroke="#111" /></svg>
      </ViewBtn>
      <ViewBtn>
        <svg width="12" height="11" viewBox="0 0 12 11"><path d="M0.500 0.500 H11.500 V10.500 H0.500Z M0.500 1.500 H11.500" fill="none" stroke="#111" /></svg>
      </ViewBtn>
      <ViewBtn><FloatIcon /></ViewBtn>
      <ViewBtn><CloseIcon /></ViewBtn>
    </div>
  </div>
);

const legend: [string, string | null, number, number, number][] = [
  ["0", null, 562, 565, 571],
  ["1", "#ff0000", 579, 581, 587],
  ["2", "#00ff00", 597, 597, 602],
  ["3", "#0000ff", 613, 615, 618],
  ["4", "#ffff00", 630, 633, 634],
  ["5", "#ff00ff", 647, 649, 650],
  ["6", "#00ffff", 664, 666, 666],
  ["7", "#a6a6ff", 681, 683, 681],
  ["8", "#a88058", 698, 701, 697],
  ["9", "#ff80c0", 714, 717, 713],
  ["10", "#8a5cb0", 732, 735, 729],
  ["11", "#ffc080", 749, 751, 745],
];

const swatchY = [0, 581, 597, 612, 628, 644, 660, 676, 691, 707, 723, 739];
const swatchH = [0, 12, 11, 12, 12, 12, 12, 11, 12, 12, 12, 11];

function shade(t: number) {
  const k = t < 0.5 ? 0.5 + 0.5 * Math.pow(t / 0.5, 0.5) : 1 - 0.42 * Math.pow(Math.max(0, t - 0.66) / 0.34, 2.4);
  return `rgb(${Math.round(172 * k)},${Math.round(172 * k)},${Math.round(167 * k)})`;
}

const bands = Array.from({ length: 34 }, (_, i) => i);

const Scene = () => (
  <svg viewBox="289 201 862 563" className="absolute inset-0 w-full h-full" fontFamily="Liberation Sans, sans-serif">
    <defs>
      <clipPath id="cyl">
        <path d="M612 279 Q713 283 815.700 275 L815.700 557 L815 561 C800 580 750 588 707 588 C670 588 635 582 623 561Z" />
      </clipPath>
    </defs>
    <path d="M578 598 L865 548 L883 598 L891 647 L562 702 L551 655 L563 628Z" fill="#b30000" />
    <path d="M551 655 L883 598 L891 647 L562 702Z" fill="#a90000" />
    <g clipPath="url(#cyl)">
      {bands.map((i) => (
        <rect key={i} x={612 + i * 6} y="270" width="6.500" height="325" fill={shade(i / 33.5)} />
      ))}
    </g>
    <path d="M361 693 H390" stroke="#ff1010" strokeWidth="1.500" />
    <path d="M392 689 L400 692.500 L392 696Z" fill="#d00000" />
    <path d="M361 693 V720" stroke="#10ff10" strokeWidth="1.500" />
    <path d="M358 720 L361 729 L364 720Z" fill="#00c000" />
    <circle cx="358.700" cy="700.700" r="3.200" fill="#8a7a10" />
    <text x="393" y="693" fontSize="10" fill="#222">X</text>
    <text x="363" y="701" fontSize="10" fill="#222">Y</text>
    <text x="362" y="722" fontSize="10" fill="#222">Z</text>
    {legend.map(([t, c, y, l1, l2], i) => (
      <g key={t}>
        <text x="1099" y={y + 6} textAnchor="end" fontSize="16" fill="#111" textLength={t.length > 1 ? 15 : undefined} lengthAdjust="spacingAndGlyphs">
          {t}
        </text>
        <path d={`M1100 ${l1} L1107 ${l2}`} stroke="#111" strokeWidth="0.8" />
        {c && <rect x="1107" y={swatchY[i]} width="16" height={swatchH[i]} fill={c} />}
      </g>
    ))}
    <text transform="translate(1141 711) rotate(-90)" fontSize="17" fill="#111">vtkBlockColors</text>
  </svg>
);

const StatusStrip = () => (
  <div className="flex items-start h-[13px] shrink-0 bg-[#efefef] pl-[287px]">
    <div className="mt-[8px] w-[18px] h-[5px] bg-[#d0d0d0] border border-[#bbb]" />
    <div className="mt-[7px] ml-[2px] w-[543px] h-[6px] border-t border-l border-r border-[#9a9a9a]" />
  </div>
);

const RightPane = () => (
  <div className="flex-1 min-w-0 ml-[3px] flex flex-col bg-[#efefef]">
    <div className="h-[21px] shrink-0 pl-[2px] flex items-end bg-[#efefef]">
      <div className="w-[105px] h-[19px] bg-white flex items-center pl-[10px]">
        <svg width="10" height="10" viewBox="0 0 10 10"><path d="M0.500 0.500 H9.500 V9.500 H0.500Z M0.500 1.500 H9.500" fill="none" stroke="#111" /></svg>
        <span className="ml-[4px] pt-[2px] whitespace-pre">Layout #1</span>
        <span className="ml-[4px] flex"><CloseIcon /></span>
      </div>
      <div className="w-[27px] h-[18px] bg-[#efefef] border border-b-0 border-[#d8d8d8] flex items-center justify-center font-bold">+</div>
    </div>
    <ViewToolbar />
    <div className="ml-[2px] w-[866px] h-[567px] shrink-0 border-2 border-[#0000ff] bg-white relative overflow-hidden">
      <Scene />
    </div>
    <StatusStrip />
  </div>
);

export default function App() {
  return (
    <div className="relative w-[1155px] h-[778px] overflow-hidden bg-white flex text-[11px] tracking-[-0.6px] text-black font-['Liberation_Mono',monospace]">
      <Defs />
      <div className="w-[3px] shrink-0 bg-white" />
      <div className="flex-1 min-w-0 flex flex-col border-t border-l border-[#7a7a7a]">
        <div className="h-[32px] shrink-0 flex items-center bg-white pl-[8px] font-['Noto_Sans',sans-serif] text-[12.400px] tracking-normal">
          <svg width="15" height="12" viewBox="0 0 15 12" className="mr-[6px]">
            <path d="M3 1 H6 L4 11 H0.500Z" fill="#c8402a" />
            <path d="M7 1 H10 L8 11 H4.800Z" fill="#3a9a3a" />
            <path d="M11 1 H14 L12 11 H9Z" fill="#2a5aa8" />
          </svg>
          <span>ParaView 5.5.0 64-bit</span>
          <div className="flex-1" />
          <svg width="11" height="1" viewBox="0 0 11 1" className="mr-[34px]"><rect width="11" height="1" fill="#111" /></svg>
          <svg width="11" height="11" viewBox="0 0 11 11" className="mr-[35px]"><rect x="0.500" y="0.500" width="10" height="10" fill="none" stroke="#111" /></svg>
          <svg width="12" height="12" viewBox="0 0 12 12" className="mr-[15px]"><path d="M0.500 0.500 L11.500 11.500 M11.500 0.500 L0.500 11.500" stroke="#111" /></svg>
        </div>
        <div className="h-[22px] shrink-0 flex items-center gap-[16px] pl-[8px] pt-[2px] bg-white font-['Noto_Sans',sans-serif] text-[12.200px] tracking-normal text-[#111] border-b border-[#ececec]">
          <span><u>F</u>ile</span>
          <span><u>E</u>dit</span>
          <span><u>V</u>iew</span>
          <span><u>S</u>ources</span>
          <span>Fi<u>l</u>ters</span>
          <span><u>T</u>ools</span>
          <span><u>C</u>atalyst</span>
          <span><u>M</u>acros</span>
          <span><u>H</u>elp</span>
        </div>
        <Toolbar1 />
        <Toolbar2 />
        <Toolbar3 />
        <div className="flex-1 min-h-0 flex bg-[#efefef]">
          <Sidebar />
          <RightPane />
        </div>
      </div>
      <div className="absolute left-[874px] top-[751px] whitespace-nowrap font-['Liberation_Sans',sans-serif] text-[16px] leading-[16px] tracking-normal text-[#dedede] opacity-70">
        https://blog.csdn.net/weixin_44210987
      </div>
    </div>
  );
}
